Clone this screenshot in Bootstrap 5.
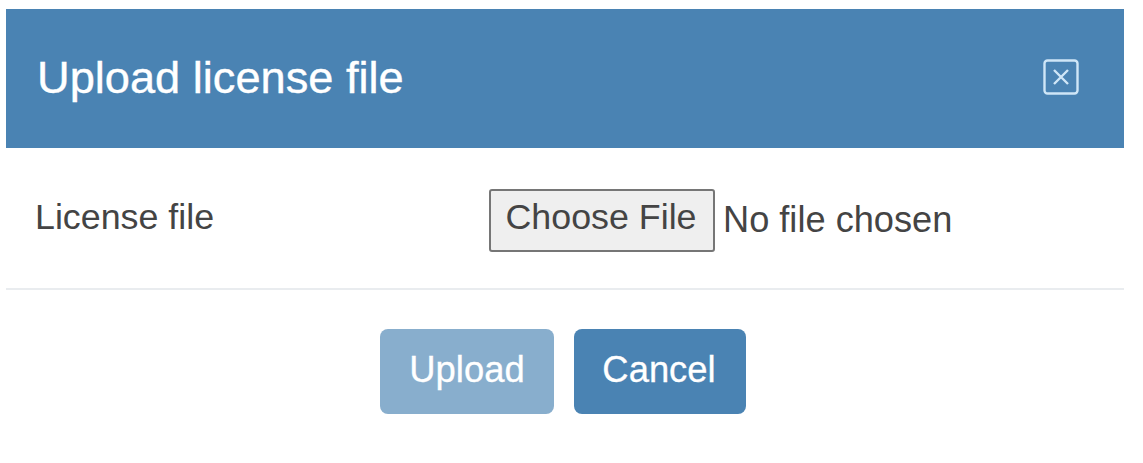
<!DOCTYPE html>
<html lang="en">
<head>
<meta charset="utf-8">
<title>Upload license file</title>
<link href="https://cdn.jsdelivr.net/npm/bootstrap@5.3.0/dist/css/bootstrap.min.css" rel="stylesheet">
<style>
html, body { background: #fff; overflow: hidden; }
body { font-family: "Liberation Sans", Arial, sans-serif; color: #333; }
.dlg { width: 1118px; margin: 9px 0 0 6px; }
.dlg-head { height: 139px; background: #4a83b3; color: #fff; padding: 0 45px 0 31px; }
.dlg-title { font-size: 45.2px; line-height: 1; margin: 0 0 2px; font-weight: 400; font-family: inherit; -webkit-text-stroke: .4px #fff; }
.dlg-close { width: 36px; height: 36px; padding: 0; background: transparent; border: 0; line-height: 0; margin-bottom: 3px; }
.dlg-body { height: 142px; border-bottom: 2px solid #e9ecef; padding-left: 29px; padding-top: 2px; }
.dlg-label { width: 454px; font-size: 35.8px; margin: 0 0 2px; color: #444; }
.file-in { font-size: 36.2px; color: #444; width: 600px; font-family: inherit; margin-top: 2px; }
.file-in::file-selector-button { width: 226px; height: 63px; font: inherit; font-size: 35.8px; color: #444; background: #efefef; border: 2px solid #767676; border-radius: 3px; margin-right: 8px; padding: 0 2px 4px 0; vertical-align: 2px; }
.dlg-foot { padding-top: 39px; padding-right: 4px; }
.act { height: 85px; border-radius: 8px; border: 0; font-size: 36.4px; color: #fff; background: #4a83b3; padding: 0 0 2px; -webkit-text-stroke: .3px #fff; }
.act-a { width: 174px; }
.act-b { width: 172px; padding-right: 2px; }
.act:disabled { background: #4a83b3; opacity: .65; color: #fff; }
.gap-act { gap: 20px; }
</style>
</head>
<body>
<div class="dlg">
  <div class="dlg-head d-flex align-items-center justify-content-between">
    <h5 class="dlg-title">Upload license file</h5>
    <button type="button" class="dlg-close" aria-label="Close">
      <svg width="36" height="36" viewBox="0 0 36 36" fill="none" stroke="#cfe6f7" stroke-width="2.4"><rect x="1.5" y="1.5" width="33" height="33" rx="3"/><path d="M11 11 25 25M25 11 11 25"/></svg>
    </button>
  </div>
  <div class="dlg-body d-flex align-items-center">
    <label class="dlg-label" for="lic">License file</label>
    <input class="file-in" id="lic" type="file">
  </div>
  <div class="dlg-foot d-flex justify-content-center gap-act">
    <button type="button" class="btn act act-a" disabled>Upload</button>
    <button type="button" class="btn act act-b">Cancel</button>
  </div>
</div>
<script src="https://cdn.jsdelivr.net/npm/bootstrap@5.3.0/dist/js/bootstrap.bundle.min.js"></script>
</body>
</html>
